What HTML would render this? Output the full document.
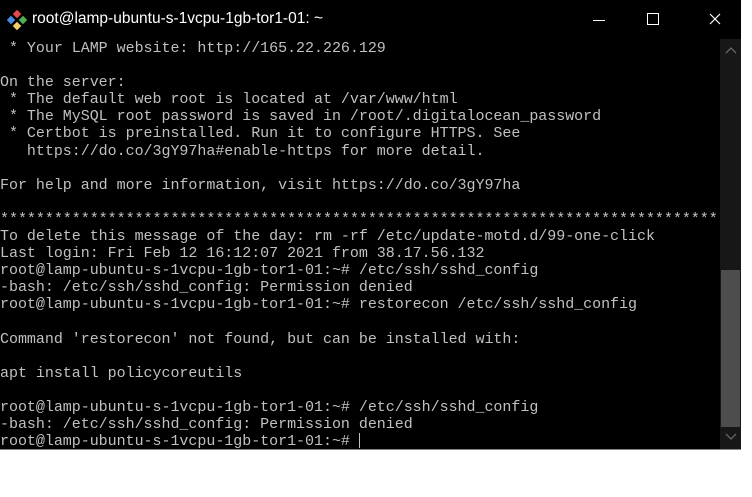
<!DOCTYPE html>
<html><head><style>
html,body{margin:0;padding:0;width:752px;height:497px;background:#fff;overflow:hidden}
.win{position:absolute;left:0;top:0;width:741px;height:449px;background:#000;border-bottom:1px solid #888}
.title{position:absolute;left:32px;top:10px;color:#fff;font:15.5px "Liberation Sans",sans-serif;letter-spacing:0px}
pre{position:absolute;left:0;top:40px;margin:0;color:#c0c0c0;font:15px/17.1px "Liberation Mono",monospace;letter-spacing:-0.03px}
.sb{position:absolute;left:720px;top:39px;width:21px;height:410px;background:#171717}
.th{position:absolute;left:721px;top:270px;width:19px;height:157px;background:#4d4d4d}
</style></head><body>
<div class="win">
<svg style="position:absolute;left:7px;top:10px" width="20" height="20" viewBox="0 0 20 20">
<rect x="7" y="1" width="6" height="6" fill="#e24a4a" transform="rotate(45 10 4)"/>
<rect x="1" y="7" width="6" height="6" fill="#4a8ae0" transform="rotate(45 4 10)"/>
<rect x="13" y="7" width="6" height="6" fill="#4cb050" transform="rotate(45 16 10)"/>
<rect x="7" y="13" width="6" height="6" fill="#f0d060" transform="rotate(45 10 16)"/>
</svg>
<div class="title">root@lamp-ubuntu-s-1vcpu-1gb-tor1-01: ~</div>
<div style="position:absolute;left:593px;top:20px;width:12px;height:1px;background:#fff"></div>
<div style="position:absolute;left:647px;top:13px;width:10px;height:10px;border:1px solid #fff"></div>
<svg style="position:absolute;left:709px;top:13px" width="12" height="12"><path d="M1 1L11 11M11 1L1 11" stroke="#fff" stroke-width="1.2"/></svg>
<div class="sb"></div><div class="th"></div>
<svg style="position:absolute;left:725px;top:46px" width="12" height="8"><path d="M1 7L6 2L11 7" stroke="#666" fill="none" stroke-width="1.3"/></svg>
<svg style="position:absolute;left:725px;top:433px" width="12" height="8"><path d="M1 1L6 6L11 1" stroke="#666" fill="none" stroke-width="1.3"/></svg>
<pre> * Your LAMP website: http://165.22.226.129

On the server:
 * The default web root is located at /var/www/html
 * The MySQL root password is saved in /root/.digitalocean_password
 * Certbot is preinstalled. Run it to configure HTTPS. See
   https://do.co/3gY97ha#enable-https for more detail.

For help and more information, visit https://do.co/3gY97ha

********************************************************************************
To delete this message of the day: rm -rf /etc/update-motd.d/99-one-click
Last login: Fri Feb 12 16:12:07 2021 from 38.17.56.132
root@lamp-ubuntu-s-1vcpu-1gb-tor1-01:~# /etc/ssh/sshd_config
-bash: /etc/ssh/sshd_config: Permission denied
root@lamp-ubuntu-s-1vcpu-1gb-tor1-01:~# restorecon /etc/ssh/sshd_config

Command 'restorecon' not found, but can be installed with:

apt install policycoreutils

root@lamp-ubuntu-s-1vcpu-1gb-tor1-01:~# /etc/ssh/sshd_config
-bash: /etc/ssh/sshd_config: Permission denied
root@lamp-ubuntu-s-1vcpu-1gb-tor1-01:~# <span style="display:inline-block;width:1px;height:15px;background:#c0c0c0;vertical-align:-3px"></span></pre>
</div>
</body></html>
